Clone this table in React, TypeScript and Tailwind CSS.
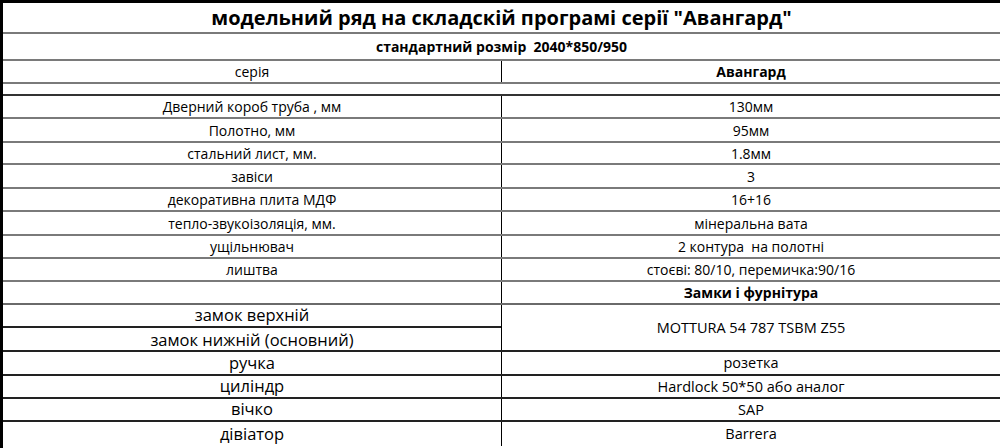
const font = { fontFamily: '"Open Sans", "Noto Sans", sans-serif' };

type Row = { left: string; right: string; h: string; line: string; boldRight?: boolean };

const specs: Row[] = [
  { left: 'Дверний короб труба , мм', right: '130мм', h: 'h-[23px]', line: 'border-[#7a7a7a]' },
  { left: 'Полотно, мм', right: '95мм', h: 'h-[24px]', line: 'border-[#7a7a7a]' },
  { left: 'стальний лист, мм.', right: '1.8мм', h: 'h-[22px]', line: 'border-[#7a7a7a]' },
  { left: 'завіси', right: '3', h: 'h-[24px]', line: 'border-[#7a7a7a]' },
  { left: 'декоративна плита МДФ', right: '16+16', h: 'h-[23px]', line: 'border-[#7a7a7a]' },
  { left: 'тепло-звукоізоляція, мм.', right: 'мінеральна вата', h: 'h-[24px]', line: 'border-[#7a7a7a]' },
  { left: 'ущільнювач', right: '2 контура  на полотні', h: 'h-[23px]', line: 'border-[#7a7a7a]' },
  { left: 'лиштва', right: 'стоєві: 80/10, перемичка:90/16', h: 'h-[23px]', line: 'border-[#7a7a7a]' },
  { left: '', right: 'Замки і фурнітура', h: 'h-[23px]', line: 'border-[#6a6a6a]', boldRight: true },
];

const fittings: Row[] = [
  { left: 'ручка', right: 'розетка', h: 'h-[24px]', line: 'border-[#222]' },
  { left: 'циліндр', right: 'Hardlock 50*50 або аналог', h: 'h-[23px]', line: 'border-[#222]' },
  { left: 'вічко', right: 'SAP', h: 'h-[23px]', line: 'border-[#222]' },
  { left: 'дівіатор', right: 'Barrera', h: 'h-[26px]', line: 'border-transparent' },
];

function SpecRow({ row, bigLeft }: { row: Row; bigLeft?: boolean }) {
  return (
    <div className={`flex ${row.h} border-b-2 ${row.line}`}>
      <div
        className={`w-[499px] shrink-0 border-r border-black flex items-center justify-center ${
          bigLeft ? 'text-[16.5px]' : 'text-[14px]'
        }`}
      >
        {row.left}
      </div>
      <div
        className={`flex-1 flex items-center justify-center whitespace-pre ${
          bigLeft ? 'text-[14.5px]' : 'text-[14px]'
        } ${row.boldRight ? 'font-bold' : ''}`}
      >
        {row.right}
      </div>
    </div>
  );
}

export default function App() {
  return (
    <main className="w-[1000px] h-[448px] overflow-hidden bg-white text-black" style={font}>
      <div className="h-full border-t-[3px] border-l-[3px] border-black flex flex-col">
        <div className="h-[31px] border-b-2 border-[#7a7a7a] flex items-center justify-center">
          <h1 className="text-[20px] font-bold leading-none">модельний ряд на складскій програмі серії "Авангард"</h1>
        </div>
        <div className="h-[27px] border-b-2 border-[#7a7a7a] flex items-center justify-center">
          <p className="text-[14px] font-bold whitespace-pre">стандартний розмір  2040*850/950</p>
        </div>
        <div className="flex h-[23px] border-b-2 border-[#7a7a7a]">
          <div className="w-[499px] shrink-0 border-r border-black flex items-center justify-center text-[14px]">серія</div>
          <div className="flex-1 flex items-center justify-center text-[14px] font-bold">Авангард</div>
        </div>
        <div className="h-[12px] border-b-2 border-[#333]" />

        {specs.map((row, i) => (
          <SpecRow key={i} row={row} />
        ))}

        <div className="flex h-[47px] border-b-2 border-[#222]">
          <div className="w-[499px] shrink-0 border-r border-black flex flex-col text-[16.5px]">
            <div className="h-[23px] border-b-2 border-[#222] flex items-center justify-center">замок верхній</div>
            <div className="flex-1 flex items-center justify-center">замок нижній (основний)</div>
          </div>
          <div className="flex-1 flex items-center justify-center text-[14.5px]">MOTTURA 54 787 TSBM Z55</div>
        </div>

        {fittings.map((row, i) => (
          <SpecRow key={i} row={row} bigLeft />
        ))}
      </div>
    </main>
  );
}
